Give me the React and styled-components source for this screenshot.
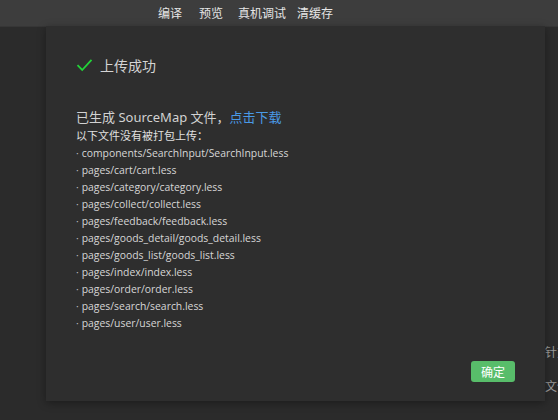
import React from 'react'
import styled, { createGlobalStyle } from 'styled-components'

const files = [
  'components/SearchInput/SearchInput.less',
  'pages/cart/cart.less',
  'pages/category/category.less',
  'pages/collect/collect.less',
  'pages/feedback/feedback.less',
  'pages/goods_detail/goods_detail.less',
  'pages/goods_list/goods_list.less',
  'pages/index/index.less',
  'pages/order/order.less',
  'pages/search/search.less',
  'pages/user/user.less',
]

// label + space after it
const tools = [
  ['编译', 17],
  ['预览', 15],
  ['真机调试', 11],
  ['清缓存', 0],
]

export default function App() {
  return (
    <>
      <Global />
      <Page>
        <TopBar>
          {tools.map(([t, gap]) => (
            <Tool key={t} $gap={gap}>{t}</Tool>
          ))}
        </TopBar>
        <Workspace>
          <SideText>
            <span>针对</span>
            <span>文件</span>
          </SideText>
          <Dialog>
            <Title>
              <svg width="17" height="14" viewBox="0 0 17 14">
                <path d="M1.5 7.2 L6.2 12 L15.5 1.8" fill="none" stroke="#22d338" strokeWidth="1.8" />
              </svg>
              上传成功
            </Title>
            <Body>
              <Lead>已生成 SourceMap 文件，<Link>点击下载</Link></Lead>
              <Sub>以下文件没有被打包上传：</Sub>
              <List>
                {files.map(f => (
                  <Item key={f}>{f}</Item>
                ))}
              </List>
            </Body>
            <Footer>
              <OkButton>确定</OkButton>
            </Footer>
          </Dialog>
        </Workspace>
      </Page>
    </>
  )
}

const Global = createGlobalStyle`
  html, body {
    margin: 0;
    background: #2b2b2b;
    font-family: "Noto Sans", "Noto Sans CJK SC", sans-serif;
  }
`

const Page = styled.div`
  width: 558px;
  height: 420px;
  display: flex;
  flex-direction: column;
  overflow: hidden;
`

const TopBar = styled.div`
  height: 26px;
  flex-shrink: 0;
  background: #3d3d3d;
  display: flex;
  align-items: center;
  padding-left: 158px;
  box-shadow: 0 1px 0 #363636;
`

const Tool = styled.span`
  color: #e6e6e6;
  font-size: 12px;
  line-height: 16px;
  margin-right: ${p => p.$gap}px;
  font-family: "Noto Sans CJK SC", sans-serif;
`

const Workspace = styled.div`
  position: relative;
  flex: 1;
  display: flex;
  justify-content: flex-end;
`

const SideText = styled.div`
  width: 13px;
  padding-top: 317px;
  display: flex;
  flex-direction: column;
  gap: 17px;
  color: #9a9a9a;
  font-size: 12px;
  white-space: nowrap;
  font-family: "Noto Sans CJK SC", sans-serif;
`

const Dialog = styled.div`
  position: absolute;
  left: 46px;
  top: 0;
  width: 499px;
  height: 375px;
  box-sizing: border-box;
  background: #2e2e2e;
  box-shadow: 0 2px 8px rgba(0, 0, 0, 0.35);
  padding: 31px 30px 19px 30px;
  display: flex;
  flex-direction: column;
`

const Title = styled.div`
  display: flex;
  align-items: center;
  gap: 7px;
  color: #d4d4d4;
  font-size: 14px;
  line-height: 16px;
  font-family: "Noto Sans CJK SC", sans-serif;
`

const Body = styled.div`
  margin-top: 36px;
  flex: 1;
`

const Lead = styled.div`
  color: #d2d2d2;
  font-size: 13px;
  line-height: 17px;
  font-family: "Noto Sans", "Noto Sans CJK SC", sans-serif;
`

const Link = styled.span`
  color: #4a9ae6;
`

const Sub = styled.div`
  color: #e0e0e0;
  font-size: 11px;
  line-height: 17px;
  margin-top: 1px;
  font-family: "Noto Sans CJK SC", sans-serif;
`

const List = styled.ul`
  list-style: none;
  margin: 1px 0 0;
  padding: 0;
`

const Item = styled.li`
  color: #d6d6d6;
  font-size: 10.4px;
  line-height: 17px;
  font-family: "Open Sans", "Noto Sans", sans-serif;
  &::before {
    content: '·';
    margin-right: 3px;
    color: #bbb;
  }
`

const Footer = styled.div`
  display: flex;
  justify-content: flex-end;
`

const OkButton = styled.button`
  width: 44px;
  height: 21px;
  border: none;
  border-radius: 3px;
  background: #58bd6a;
  color: #fff;
  font-size: 12px;
  padding: 0;
  font-family: "Noto Sans CJK SC", sans-serif;
  cursor: pointer;
`
